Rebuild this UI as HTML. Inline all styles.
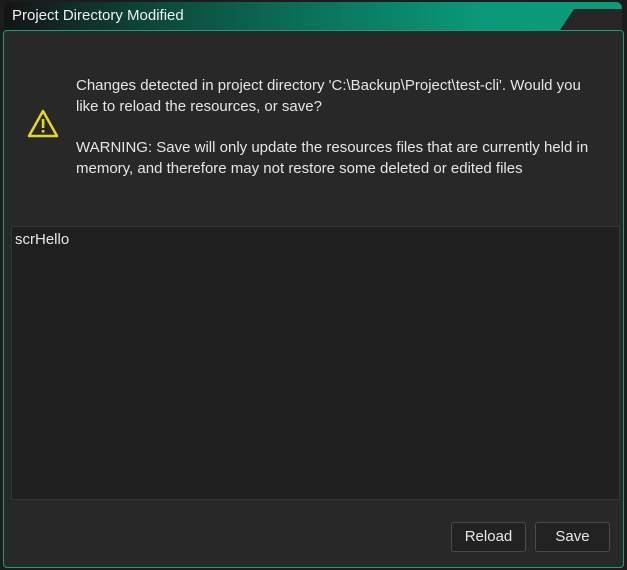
<!DOCTYPE html>
<html><head><style>
body{margin:0;width:627px;height:570px;background:#1c1c1c;overflow:hidden;font-family:"Liberation Sans","DejaVu Sans",sans-serif;color:#e8e8e8;position:relative}
.title{position:absolute;left:4px;top:2px;width:618px;height:30px;border-radius:6px 6px 0 0;background:linear-gradient(90deg,#141414 0%,#0c4a3c 25%,#0a7a60 55%,#0a9a7a 78%,#0c9c7c 100%);overflow:hidden}
.notch{position:absolute;left:550px;top:7px;width:80px;height:30px;background:#262626;clip-path:polygon(20px 0,100% 0,100% 100%,0 100%)}
.title span{position:absolute;left:8px;top:5px;font-size:15px;color:#f0f0f0}
.body{position:absolute;left:3px;top:30px;width:619px;height:536px;background:#282828;border:1px solid #17a07a;border-radius:4px}
.msg{position:absolute;left:76px;top:75px;width:535px;font-size:15px;line-height:21px;color:#e6e6e6}
.msg p{margin:0 0 20px}
.list{position:absolute;left:11px;top:226px;width:607px;height:272px;background:#1f1f1f;border:1px solid #353535}
.list span{position:absolute;left:3px;top:4px;font-size:15px}
.btn{position:absolute;top:522px;height:28px;border:1px solid #4a4a4a;border-radius:3px;background:#222;font-size:15px;text-align:center;line-height:28px}
</style></head><body>
<div class="title"><div class="notch"></div><span>Project Directory Modified</span></div>
<div class="body"></div>
<svg style="position:absolute;left:26px;top:109px" width="34" height="30" viewBox="0 0 34 30"><path d="M17 2 L31 27 L3 27 Z" fill="none" stroke="#e8d81c" stroke-width="2.5" stroke-linejoin="round"/><rect x="15.8" y="10" width="2.6" height="9" fill="#e8d81c"/><rect x="15.8" y="21" width="2.6" height="2.6" fill="#e8d81c"/></svg>
<div class="msg"><p>Changes detected in project directory 'C:\Backup\Project\test-cli'. Would you<br>like to reload the resources, or save?</p><p>WARNING: Save will only update the resources files that are currently held in<br>memory, and therefore may not restore some deleted or edited files</p></div>
<div class="list"><span>scrHello</span></div>
<div class="btn" style="left:451px;width:73px">Reload</div>
<div class="btn" style="left:535px;width:73px">Save</div>
</body></html>
